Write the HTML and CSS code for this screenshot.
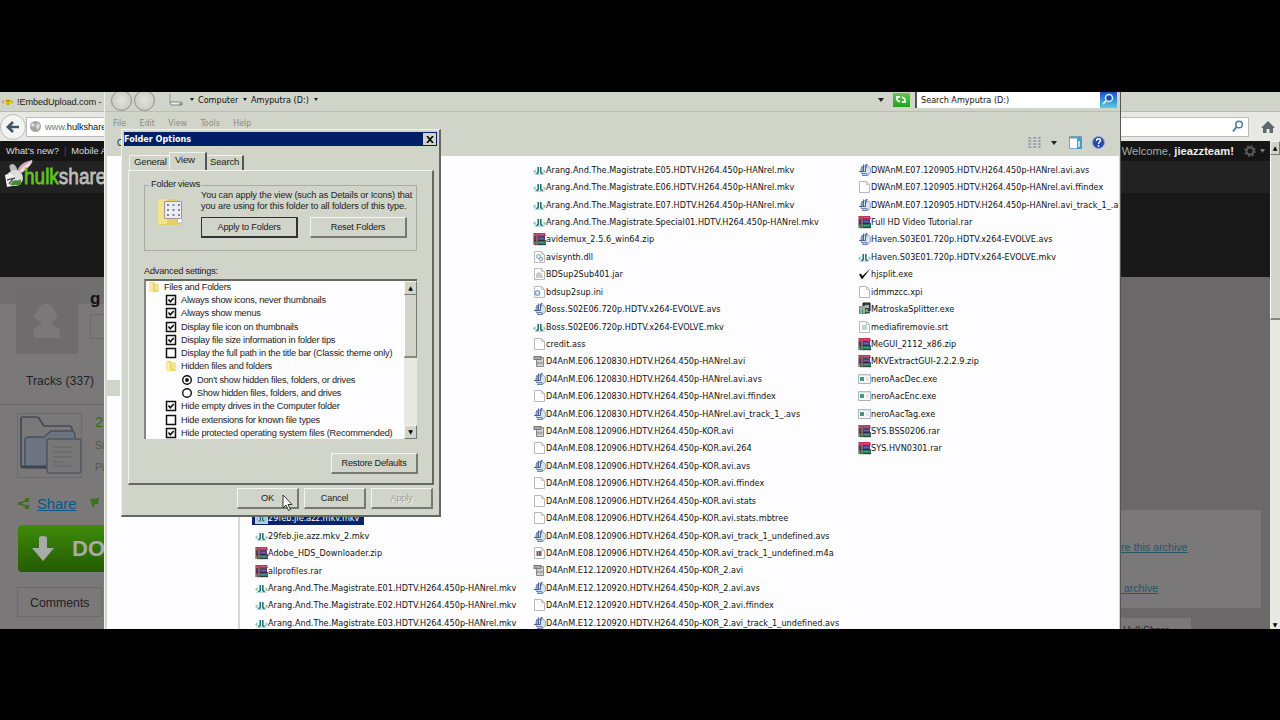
FILE: index.html
```html
<!DOCTYPE html>
<html lang="en">
<head>
<meta charset="UTF-8">
<title>Folder Options</title>
<link rel="stylesheet" href="styles.css">
</head>
<body>
<svg width="0" height="0" class="defs">
  <defs>
    <symbol id="mkv" viewBox="0 0 13 14"><path d="M2.500 6 0 8.500l2.500 2M10.500 6l2.500 2.500L10.500 10.500" fill="#7fc5ba"/><path d="M5.200 4v5q0 1.500-2 1.500M7.800 4v5q0 1.500 2 1.500" fill="none" stroke="#176b72" stroke-width="1.500"/><path d="M1.500 11.300h10" stroke="#7cc4b5" stroke-width=".7"/></symbol>
    <symbol id="rar" viewBox="0 0 13 14"><path d="M1 1h11l1 3H2z" fill="#c52b60"/><path d="M1 5h11v4H1z" fill="#4b3f92"/><path d="M1 9h12v4H2z" fill="#1c8a60"/><path d="M1 4.500h11M2 8.700h11M2 12.700h11" stroke="#271c30" stroke-width=".8"/><path d="M6 2.500h5M6 6.700h5M6 10.700h5" stroke="#b992bd" stroke-width=".5"/><path d="M4 1v12" stroke="#a66a50" stroke-width="1.400"/><path d="M1 1v12" stroke="#79213d"/></symbol>
    <symbol id="doc" viewBox="0 0 13 14"><path d="M1.500 1.500h7l3 3v8h-10z" fill="#fefeff" stroke="#b7b7bc"/><path d="M8.500 1.500v3h3" fill="none" stroke="#c5c5ca"/></symbol>
    <symbol id="dll" viewBox="0 0 13 14"><use href="#doc"/><circle cx="5.500" cy="6.500" r="2" fill="#dbe8f0" stroke="#87a2bc"/><circle cx="8" cy="9" r="1.800" fill="#e1ecf2" stroke="#7a9cbd"/></symbol>
    <symbol id="jar" viewBox="0 0 13 14"><use href="#doc"/><path d="M4 9V6M6 9V5M8 9V6M3 10h7" stroke="#a39a9a"/></symbol>
    <symbol id="ini" viewBox="0 0 13 14"><use href="#doc"/><circle cx="4.500" cy="8" r="2.500" fill="#b9d5e8" stroke="#7198ba"/><circle cx="4.500" cy="8" r=".8" fill="#fff"/></symbol>
    <symbol id="avs" viewBox="0 0 13 14"><circle cx="7.800" cy="7.500" r="5" fill="#d5e3f3" stroke="#86a1c9"/><path d="M1 8.500h3V3M5.500 1.500v7M8 5V1.500h1.500M7.500 3v5.500h-5" fill="none" stroke="#4a628e"/><path d="M3 10.500h6v2.500M4 12.500h5" fill="none" stroke="#6d84ad"/></symbol>
    <symbol id="avi" viewBox="0 0 13 14"><path d="M3.500 3.500h7v9h-7z" fill="#d9d9d9" stroke="#888"/><path d="M.5 2h8v4h-8z" fill="#777"/><path d="M1.500 4h6" stroke="#ddd"/><path d="M5 7v4M8 7v4M4 9h6" stroke="#888" stroke-width=".8"/></symbol>
    <symbol id="m4a" viewBox="0 0 13 14"><use href="#doc"/><path d="M3.500 5h5v5h-5z" fill="#765d61"/><path d="M5.500 5v5" stroke="#b69ca0"/></symbol>
    <symbol id="check" viewBox="0 0 13 14"><path d="M1 7.500 4 12.500 12.500 1.500 4.300 9 3 6.500z" fill="#111"/></symbol>
    <symbol id="setup" viewBox="0 0 13 14"><path d="M5 1h7v8H5z" fill="#35443f" stroke="#222"/><path d="M7 3h4v3H7z" fill="#a5b3b0"/><path d="M1 4h6v4H1z" fill="#87948e"/><path d="M1 8h9v4H1z" fill="#569468"/><path d="M3 5v7M6 4v7M9 7v5" stroke="#c1d4c1"/><path d="M7 10.500h5" stroke="#32573b" stroke-width="1.500"/></symbol>
    <symbol id="srt" viewBox="0 0 13 14"><use href="#doc"/><path d="M4 5h5v5H4z" fill="#b4dbd7"/></symbol>
    <symbol id="exe" viewBox="0 0 13 14"><path d="M.5 2.500h12v9H.5z" fill="#f5f9f9" stroke="#a5b5bb"/><path d="M1 3h11" stroke="#b6cddb"/><path d="M2 5h4v4H2z" fill="#4d917e"/><path d="M8 6h3M8 8h3" stroke="#ccd8dc"/></symbol>
    <symbol id="folder" viewBox="0 0 12 13"><path d="M1 1h5v2h5v9H1z" fill="#e5d569"/><path d="M1 1l4 2v10l-4-1z" fill="#f6eda0"/><path d="M7 2h3v8H7z" fill="#f2e798"/></symbol>
  </defs>
</svg>

<div class="screen">
  <!-- browser behind the windows -->
  <div class="browser">
    <div class="tabbar">
      <svg width="13" height="12" viewBox="0 0 13 12"><path d="M4 6a3 3 0 1 1 6 0 3 3 0 0 1-6 0" fill="#e6cf17"/><path d="M0 6l3-2v4zM13 6l-3-2v4z" fill="#c6b438"/><path d="M5 5h4M6 8h2" stroke="#82730c"/></svg>
      <span>!EmbedUpload.com - upload</span>
    </div>
    <div class="navbar">
      <div class="back"><svg width="14" height="14" viewBox="0 0 14 14"><path d="M7 2 2 7l5 5M2 7h11" fill="none" stroke="#41526b" stroke-width="2.700"/></svg></div>
      <div class="url">
        <svg width="13" height="13" viewBox="0 0 13 13"><circle cx="6.500" cy="6.500" r="5.500" fill="#a5a5a5"/><path d="M3 3l3 1-1 3-3-1M8 3l3 2-2 5-2-3" fill="#ddd"/></svg>
        <span>www.<b>hulkshare.com</b></span>
        <svg class="mag" width="12" height="13" viewBox="0 0 12 13"><circle cx="7" cy="4.500" r="3.300" fill="#fff" stroke="#4c79a8" stroke-width="1.500"/><path d="M4.500 7 1 11.500" stroke="#4c79a8" stroke-width="2"/></svg>
      </div>
      <svg class="home" width="14" height="14" viewBox="0 0 14 14"><path d="M7 1 0 8h2v5h3.500V9h3v4H12V8h2z" fill="#62666f"/></svg>
    </div>
    <div class="viewport">
      <div class="page">
        <div class="topbar">
          <span>What's new?</span><i>|</i><span>Mobile App</span>
          <div class="user">Welcome, <b>jieazzteam!</b>
            <svg width="24" height="12" viewBox="0 0 24 12"><circle cx="7" cy="6" r="3.500" fill="none" stroke="#5b5b5b" stroke-width="2"/><circle cx="7" cy="6" r="5" fill="none" stroke="#5b5b5b" stroke-width="1.500" stroke-dasharray="2 1.930"/><path d="M17 4h5l-2.500 4z" fill="#777"/></svg>
          </div>
        </div>
        <div class="brand">
          <svg width="32" height="34" viewBox="0 0 32 34"><path d="M15 14C15 7 20 2 30 0c2 3-4 8-11 12z" fill="#d5a9bc"/><path d="M10 13C7 8 6 4 11 4c4 2 4 5 5 9z" fill="#bbb"/><path d="M18 11c4-6 8-7 12-11-2 7-6 9-10 13z" fill="#f1dfe6"/><circle cx="13" cy="18" r="8" fill="#ddd"/><path d="M3 15l5-2 5 4-3 9-5 1z" fill="#f1f1f1"/><path d="M5 20l8-2M7 24l4-5" stroke="#555" stroke-width="1.500"/><path d="M11 21c3-2 5 1 8-2v6H8z" fill="#488a31"/></svg>
          <span><em>hulk</em>share</span>
        </div>
        <div class="banner"></div>
        <div class="content">
          <div class="left">
            <div class="profile">
              <div class="avatar"><svg width="34" height="36" viewBox="0 0 34 36"><path d="M10 2c5-4 13-2 14 4l4 7-7 6 9 6v9H4v-9l8-6-9-6z" fill="#7a7878"/></svg></div>
              <div class="name">g<span></span></div>
            </div>
            <div class="tracks">Tracks (337)</div>
            <div class="file">
              <div class="thumb"><svg width="64" height="62" viewBox="0 0 64 62"><path d="M2 52V4q0-2 2-2h13q3 0 4 3l4 6h25q3 0 3 3v3" fill="none" stroke="#414b54" stroke-width="1.700"/><path d="M6 52V25q0-3 3-3h16l7-6h21q3 0 3 5v4H33q-5 0-5 4v24z" fill="#6d7480" stroke="#46525f" stroke-width="1.500"/><path d="M2 52h25" stroke="#3a4653" stroke-width="3"/><rect x="28" y="24" width="34" height="34" rx="2" fill="#777" stroke="#54585c" stroke-width="1.500"/><path d="M34 32h20M34 37h18M34 42h20M34 47h10M34 51h19" stroke="#626466"/></svg></div>
              <div class="info"><b>29</b><span>Size</span><span>Plays</span></div>
            </div>
            <div class="share">
              <svg width="11" height="11" viewBox="0 0 11 11"><path d="M9 2 2 5.500 9 9" fill="none" stroke="#3c731b" stroke-width="1.500"/><path d="M7 0h4v4H7zM0 4h4v3H0zM7 7h4v4H7z" fill="#3c731b"/></svg>
              <a>Share</a>
              <svg width="10" height="11" viewBox="0 0 10 11"><path d="M0 1l9-1-1 6H5l-2 4z" fill="#3c731b"/></svg>
            </div>
            <div class="download"><svg width="22" height="26" viewBox="0 0 22 26"><path d="M7 2q0-2 4-2t4 2v10h7L11 25 0 12h7z" fill="#aaa"/></svg><span>DOWNLOAD</span></div>
            <div class="comments">Comments</div>
          </div>
          <div class="right">
            <div class="links"><a>Share this archive</a><a>Flag archive</a></div>
            <div class="hash">HulkShare</div>
          </div>
        </div>
      </div>
      <div class="scroll"><div class="sbtn">▲</div><div class="sthumb"></div><div class="strack"></div><div class="sbtn flat">▼</div></div>
    </div>
  </div>

  <!-- explorer window -->
  <div class="explorer">
    <div class="address">
      <div class="round"></div><div class="round"></div>
      <svg class="drive" width="15" height="14" viewBox="0 0 15 14"><path d="M1 1v8" stroke="#999"/><path d="M1 9h12v3H2z" fill="#eee" stroke="#888"/><path d="M10 11h3" stroke="#555"/></svg>
      <i class="tri"></i><span class="c1">Computer</span><i class="tri"></i><span class="c2">Amyputra (D:)</span><i class="tri"></i>
      <i class="tri big"></i>
      <div class="refresh"><svg width="16" height="13" viewBox="0 0 16 13"><path d="M4 7V4h3M4 7l3 2M12 6v3H9M12 6 9 4" fill="none" stroke="#edffe8" stroke-width="2"/></svg></div>
      <div class="search"><span>Search Amyputra (D:)</span></div>
      <div class="go"><svg width="16" height="15" viewBox="0 0 16 15"><circle cx="9" cy="6" r="3.500" fill="#1950b0" stroke="#d4eeff" stroke-width="1.500"/><path d="M6 9l-3 3" stroke="#d4eeff" stroke-width="2"/></svg></div>
    </div>
    <div class="menu"><span>File</span><span>Edit</span><span>View</span><span>Tools</span><span>Help</span></div>
    <div class="tools">
      <span>Organize</span>
      <svg class="views" width="13" height="11" viewBox="0 0 13 11"><path d="M1.500 0v11M6.500 0v11M11.500 0v11" stroke="#9097a4" stroke-width="2" stroke-dasharray="2 1"/><path d="M3.500 0v11M8.500 0v11" stroke="#b9bdc6" stroke-width="1.500" stroke-dasharray="2 1"/></svg>
      <i class="tri big"></i>
      <svg width="13" height="13" viewBox="0 0 13 13"><path d="M.5.5h12v12H.5z" fill="#fff" stroke="#79a4bd"/><path d="M0 1.500h13" stroke="#6f9cb4" stroke-width="2"/><path d="M8 2h5v11H8z" fill="#3ca5bb"/><path d="M10 5v6" stroke="#b0e7ef" stroke-width="2"/></svg>
      <svg width="13" height="13" viewBox="0 0 13 13"><circle cx="6.500" cy="6.500" r="6" fill="#274bab" stroke="#90a6db"/><path d="M4.500 5c0-3 4-3 4-.5C8.500 6 6.500 6 6.500 8M6.500 9v1.700" fill="none" stroke="#fff" stroke-width="1.400"/></svg>
    </div>
    <div class="panes">
      <div class="tree"><div class="mark"></div></div>
      <div class="files">
        <div class="col one" id="col1"></div>
        <div class="col two" id="col2"></div>
        <div class="col three" id="col3"></div>
      </div>
    </div>
  </div>

  <!-- dialog -->
  <div class="dialog">
    <div class="title"><span>Folder Options</span><div class="close"><svg width="8" height="7" viewBox="0 0 8 7"><path d="M1 0l6 7M7 0 1 7" stroke="#000" stroke-width="1.600"/></svg></div></div>
    <div class="tabs"><div class="tab">General</div><div class="tab active">View</div><div class="tab last">Search</div></div>
    <div class="panel">
      <div class="group">
        <div class="legend"><span>Folder views</span></div>
        <div class="groupbody">
          <svg width="27" height="29" viewBox="0 0 27 29"><path d="M1 1h19l3 5v21H1z" fill="#e4ce66"/><path d="M1 1h9v25H1z" fill="#f2e493"/><path d="M21 20h4v5h-5z" fill="#fff" stroke="#bbb"/><path d="M7.500 3.500h17v17h-17z" fill="#eeedf3" stroke="#999"/><path d="M10 7h13M10 12h13M10 17h13" stroke="#858097" stroke-width="2" stroke-dasharray="2 3.500"/></svg>
          <div>
            <p>You can apply the view (such as Details or Icons) that<br>you are using for this folder to all folders of this type.</p>
            <div class="pair"><div class="btn default">Apply to Folders</div><div class="btn">Reset Folders</div></div>
          </div>
        </div>
      </div>
      <div class="label">Advanced settings:</div>
      <div class="listbox">
        <div class="options" id="options"></div>
        <div class="scroll wide"><div class="sbtn">▲</div><div class="sthumb"></div><div class="strack"></div><div class="sbtn">▼</div></div>
      </div>
      <div class="btn restore">Restore Defaults</div>
    </div>
    <div class="buttons"><div class="btn">OK</div><div class="btn">Cancel</div><div class="btn disabled">Apply</div></div>
  </div>
  <svg class="cursor" width="12" height="18" viewBox="0 0 12 18"><path d="M1 1v13l3-3 2.500 5.500 2-1L6 10.500h4z" fill="#fff" stroke="#333"/></svg>
</div>

<script>
  const files = {
    col1: [
      ['mkv', '29feb.jie.azz.mkv.mkv', 'sel'],
      ['mkv', '29feb.jie.azz.mkv_2.mkv'],
      ['rar', 'Adobe_HDS_Downloader.zip'],
      ['rar', 'allprofiles.rar'],
      ['mkv', 'Arang.And.The.Magistrate.E01.HDTV.H264.450p-HANrel.mkv'],
      ['mkv', 'Arang.And.The.Magistrate.E02.HDTV.H264.450p-HANrel.mkv'],
      ['mkv', 'Arang.And.The.Magistrate.E03.HDTV.H264.450p-HANrel.mkv']
    ],
    col2: [
      ['mkv', 'Arang.And.The.Magistrate.E05.HDTV.H264.450p-HANrel.mkv'],
      ['mkv', 'Arang.And.The.Magistrate.E06.HDTV.H264.450p-HANrel.mkv'],
      ['mkv', 'Arang.And.The.Magistrate.E07.HDTV.H264.450p-HANrel.mkv'],
      ['mkv', 'Arang.And.The.Magistrate.Special01.HDTV.H264.450p-HANrel.mkv'],
      ['rar', 'avidemux_2.5.6_win64.zip'],
      ['dll', 'avisynth.dll'],
      ['jar', 'BDSup2Sub401.jar'],
      ['ini', 'bdsup2sup.ini'],
      ['avs', 'Boss.S02E06.720p.HDTV.x264-EVOLVE.avs'],
      ['mkv', 'Boss.S02E06.720p.HDTV.x264-EVOLVE.mkv'],
      ['doc', 'credit.ass'],
      ['avi', 'D4AnM.E06.120830.HDTV.H264.450p-HANrel.avi'],
      ['avs', 'D4AnM.E06.120830.HDTV.H264.450p-HANrel.avi.avs'],
      ['doc', 'D4AnM.E06.120830.HDTV.H264.450p-HANrel.avi.ffindex'],
      ['avs', 'D4AnM.E06.120830.HDTV.H264.450p-HANrel.avi_track_1_.avs'],
      ['avi', 'D4AnM.E08.120906.HDTV.H264.450p-KOR.avi'],
      ['doc', 'D4AnM.E08.120906.HDTV.H264.450p-KOR.avi.264'],
      ['avs', 'D4AnM.E08.120906.HDTV.H264.450p-KOR.avi.avs'],
      ['doc', 'D4AnM.E08.120906.HDTV.H264.450p-KOR.avi.ffindex'],
      ['doc', 'D4AnM.E08.120906.HDTV.H264.450p-KOR.avi.stats'],
      ['doc', 'D4AnM.E08.120906.HDTV.H264.450p-KOR.avi.stats.mbtree'],
      ['avs', 'D4AnM.E08.120906.HDTV.H264.450p-KOR.avi_track_1_undefined.avs'],
      ['m4a', 'D4AnM.E08.120906.HDTV.H264.450p-KOR.avi_track_1_undefined.m4a'],
      ['avi', 'D4AnM.E12.120920.HDTV.H264.450p-KOR_2.avi'],
      ['avs', 'D4AnM.E12.120920.HDTV.H264.450p-KOR_2.avi.avs'],
      ['doc', 'D4AnM.E12.120920.HDTV.H264.450p-KOR_2.avi.ffindex'],
      ['avs', 'D4AnM.E12.120920.HDTV.H264.450p-KOR_2.avi_track_1_undefined.avs']
    ],
    col3: [
      ['avs', 'DWAnM.E07.120905.HDTV.H264.450p-HANrel.avi.avs'],
      ['doc', 'DWAnM.E07.120905.HDTV.H264.450p-HANrel.avi.ffindex'],
      ['avs', 'DWAnM.E07.120905.HDTV.H264.450p-HANrel.avi_track_1_.avs'],
      ['rar', 'Full HD Video Tutorial.rar'],
      ['avs', 'Haven.S03E01.720p.HDTV.x264-EVOLVE.avs'],
      ['mkv', 'Haven.S03E01.720p.HDTV.x264-EVOLVE.mkv'],
      ['check', 'hjsplit.exe'],
      ['doc', 'idmmzcc.xpi'],
      ['setup', 'MatroskaSplitter.exe'],
      ['srt', 'mediafiremovie.srt'],
      ['rar', 'MeGUI_2112_x86.zip'],
      ['rar', 'MKVExtractGUI-2.2.2.9.zip'],
      ['exe', 'neroAacDec.exe'],
      ['exe', 'neroAacEnc.exe'],
      ['exe', 'neroAacTag.exe'],
      ['rar', 'SYS.BSS0206.rar'],
      ['rar', 'SYS.HVN0301.rar']
    ]
  };
  for (const id in files) {
    document.getElementById(id).innerHTML = files[id].map(([icon, name, cls]) =>
      `<div class="file-row ${cls || ''}"><svg width="13" height="14"><use href="#${icon}"/></svg><span>${name}</span></div>`).join('');
  }

  const options = [
    ['folder', 0, 'Files and Folders'],
    ['on', 1, 'Always show icons, never thumbnails'],
    ['on', 1, 'Always show menus'],
    ['on', 1, 'Display file icon on thumbnails'],
    ['on', 1, 'Display file size information in folder tips'],
    ['off', 1, 'Display the full path in the title bar (Classic theme only)'],
    ['folder', 1, 'Hidden files and folders'],
    ['radio-on', 2, "Don't show hidden files, folders, or drives"],
    ['radio', 2, 'Show hidden files, folders, and drives'],
    ['on', 1, 'Hide empty drives in the Computer folder'],
    ['off', 1, 'Hide extensions for known file types'],
    ['on', 1, 'Hide protected operating system files (Recommended)']
  ];
  const marks = {
    'folder': '<use href="#folder"/>',
    'on': '<path d="M1.500 1.500h9v9h-9z" fill="#fff" stroke="#111" stroke-width="1.500"/><path d="M3.500 5.500 5.300 7.800 8.700 4" fill="none" stroke="#111" stroke-width="1.700"/>',
    'off': '<path d="M1.500 1.500h9v9h-9z" fill="#fff" stroke="#111" stroke-width="1.500"/>',
    'radio': '<circle cx="6" cy="6" r="4.300" fill="#fff" stroke="#111" stroke-width="1.400"/>',
    'radio-on': '<circle cx="6" cy="6" r="4.300" fill="#fff" stroke="#111" stroke-width="1.400"/><circle cx="6" cy="6" r="1.900" fill="#111"/>'
  };
  document.getElementById('options').innerHTML = options.map(([mark, level, text]) =>
    `<div class="option level${level}"><svg width="12" height="12">${marks[mark]}</svg><span>${text}</span></div>`).join('');
</script>
</body>
</html>
```
FILE: styles.css
```css
* {
  box-sizing: border-box;
}
body {
  margin: 0;
  background: #000;
  font-family: "Liberation Sans", Arial, sans-serif;
  font-size: 10px;
  color: #222;
  overflow: hidden;
}
svg {
  display: block;
  flex: none;
}
.defs {
  position: absolute;
}
i, em {
  font-style: normal;
}
.screen {
  position: relative;
  width: 1280px;
  height: 537px;
  margin-top: 92px;
  overflow: hidden;
  white-space: nowrap;
}

/* browser */
.browser {
  height: 537px;
  display: flex;
  flex-direction: column;
  background: #d1d4c8;
}
.tabbar {
  flex: none;
  height: 20px;
  display: flex;
  align-items: center;
  gap: 3px;
  padding-left: 1px;
  font-size: 9.200px;
  letter-spacing: -.1px;
  border-bottom: 1px solid #b7b9b0;
}
.navbar {
  flex: none;
  height: 29px;
  display: flex;
  align-items: center;
  background: #e8e9e4;
  padding-right: 5px;
}
.back {
  width: 26px;
  height: 26px;
  border-radius: 50%;
  background: #f4f5f2;
  border: 1px solid #bbb;
  display: flex;
  align-items: center;
  justify-content: center;
}
.url {
  flex: 1;
  height: 20px;
  margin-right: 12px;
  display: flex;
  align-items: center;
  gap: 3px;
  padding: 0 4px 0 2px;
  background: #fff;
  border: 1px solid #bbb;
  color: #777;
  font-size: 9.300px;
  letter-spacing: -.1px;
}
.url b {
  font-weight: normal;
  color: #111;
}
.mag {
  margin-left: auto;
}
.viewport {
  flex: 1;
  min-height: 0;
  display: flex;
}
.page {
  flex: 1;
  display: flex;
  flex-direction: column;
  overflow: hidden;
  background: #6a6868;
}
.topbar {
  flex: none;
  height: 20px;
  display: flex;
  align-items: center;
  gap: 5px;
  padding-left: 6px;
  background: #151515;
  color: #ddd;
  font-size: 9.300px;
}
.topbar i {
  color: #555;
}
.user {
  display: flex;
  align-items: center;
  margin-left: auto;
  padding-right: 3px;
  color: #aaa;
  font-size: 11.200px;
  white-space: pre;
}
.user b {
  color: #eee;
  margin-right: 9px;
}
.brand {
  flex: none;
  height: 32px;
  display: flex;
  padding-left: 2px;
  background: #222;
}
.brand svg {
  margin-top: -1px;
}
.brand span {
  margin-left: -10px;
  padding-top: 3px;
  font-size: 19px;
  line-height: 26px;
  color: #bbb;
  -webkit-text-stroke: .7px;
  transform: scaleY(1.18);
  transform-origin: 0 60%;
}
.brand em {
  color: #5fc421;
}
.banner {
  flex: none;
  height: 84px;
  background: #181818;
}
.content {
  flex: 1;
  min-height: 0;
  display: flex;
  justify-content: space-between;
}
.left {
  width: 110px;
  height: 352px;
  overflow: hidden;
  background: linear-gradient(#706e6e 27px, #7a7878 27px);
}
.profile {
  display: flex;
  padding: 13px 0 0 16px;
  height: 88px;
}
.avatar {
  width: 67px;
  height: 64px;
  background: #6e6c6c;
  display: flex;
  align-items: center;
  justify-content: center;
}
.name {
  margin-left: 12px;
  font-size: 17px;
  line-height: 18px;
  font-weight: bold;
  color: #111;
}
.name span {
  display: block;
  width: 20px;
  height: 25px;
  margin-top: 6px;
  border: 1px solid #6c6a6a;
}
.tracks {
  height: 40px;
  padding: 9px 0 0 26px;
  font-size: 12px;
  letter-spacing: .1px;
  border-bottom: 1px solid #6c6a6a;
}
.file {
  display: flex;
  height: 86px;
  padding: 8px 0 0 17px;
}
.thumb {
  width: 65px;
  height: 65px;
  padding: 1px;
  border: 1px solid #6b6969;
}
.info {
  margin-left: 13px;
  display: flex;
  flex-direction: column;
  font-size: 10px;
  color: #555;
}
.info b {
  font-size: 15px;
  font-weight: normal;
  color: #386b18;
  height: 27px;
}
.info span {
  height: 22px;
}
.share {
  display: flex;
  align-items: center;
  height: 25px;
  padding-left: 18px;
  gap: 8px;
}
.share a {
  font-size: 14.800px;
  color: #075a89;
  text-decoration: underline;
  margin-right: 5px;
}
.download {
  margin: 9px 0 0 18px;
  height: 47px;
  width: 200px;
  display: flex;
  align-items: center;
  gap: 18px;
  padding-left: 14px;
  border-radius: 4px 0 0 4px;
  background: linear-gradient(#3e8b0b, #245b03);
  color: #aaa;
  font-size: 22px;
  font-weight: bold;
}
.comments {
  margin: 15px 0 0 17px;
  width: 85px;
  height: 30px;
  padding: 8px 0 0 12px;
  border: 1px solid #6b6969;
  font-size: 12.300px;
}
.right {
  width: 160px;
  padding-top: 233px;
}
.links {
  width: 151px;
  height: 98px;
  background: #7a7878;
  display: flex;
  flex-direction: column;
  align-items: flex-start;
  padding-top: 31px;
  gap: 28px;
}
.links a {
  font-size: 10.700px;
  line-height: 13px;
  color: #29556a;
  text-decoration: underline;
}
.links a:first-child {
  margin-left: -8px;
}
.links a:last-child {
  margin-left: -10px;
}
.hash {
  width: 81px;
  height: 30px;
  margin-top: 10px;
  padding: 7px 0 0 13px;
  background: #7a7878;
}

/* scrollbars */
.scroll {
  width: 10px;
  display: flex;
  flex-direction: column;
  background: #e8e9e2;
}
.sbtn {
  height: 14px;
  background: #d1d4c8;
  border: 1px solid #f4f5ef;
  border-right-color: #777;
  border-bottom-color: #777;
  font: 6px/11px "DejaVu Sans", sans-serif;
  text-align: center;
  color: #000;
}
.sbtn.flat {
  height: 8px;
  background: none;
  border: none;
  line-height: 7px;
}
.sthumb {
  height: 165px;
  background: #d1d4c8;
  border-left: 1px solid #fff;
  border-bottom: 2px solid #86887f;
}
.strack {
  flex: 1;
}

/* explorer */
.explorer {
  position: absolute;
  left: 104px;
  top: 0;
  width: 1017px;
  height: 537px;
  display: flex;
  flex-direction: column;
  background: #d1d4c8;
  border-left: 1px solid #eff0e8;
  border-right: 1px solid #555;
  font-family: "DejaVu Sans Condensed", "DejaVu Sans", sans-serif;
  font-stretch: condensed;
  font-size: 9px;
  color: #111;
}
.address {
  height: 20px;
  display: flex;
  align-items: center;
  padding: 0 3px 4px 6px;
  border-bottom: 1px solid #bbbdb3;
}
.round {
  width: 21px;
  height: 21px;
  margin: 1px 2px 0 0;
  border-radius: 50%;
  border: 1px solid #8e8f89;
  background: radial-gradient(#e2e3dc, #c3c5bb);
}
.drive {
  margin: 0 6px 0 12px;
}
.tri {
  border: 2.500px solid transparent;
  border-top: 3px solid #222;
  border-bottom: 0;
}
.tri.big {
  border-width: 3.500px;
  border-top-width: 4px;
  border-bottom: 0;
}
.address .c1 {
  width: 39px;
  margin: 0 6px 0 4px;
}
.address .c2 {
  width: 58px;
  margin: 0 5px 0 4px;
}
.address .big {
  margin-left: auto;
}
.refresh {
  width: 17px;
  height: 14px;
  margin: 0 5px 0 9px;
  background: linear-gradient(#5fcc52, #239e22);
}
.search {
  width: 185px;
  height: 17px;
  padding-left: 4px;
  line-height: 18px;
  background: #fff;
  border-left: 2px solid #555;
}
.go {
  width: 17px;
  height: 16px;
  background: linear-gradient(#1a51c2, #5ccbe4);
}
.menu {
  display: flex;
  gap: 13.400px;
  height: 24px;
  padding: 6px 0 0 8px;
  font-size: 8.800px;
  color: #8c8e86;
}
.tools {
  height: 20px;
  display: flex;
  align-items: center;
  padding: 0 15px 7px 12px;
}
.tools .views {
  margin-left: auto;
}
.tools .big {
  margin: 0 12px 0 10px;
}
.tools svg:last-child {
  margin-left: 10px;
}
.panes {
  flex: 1;
  display: flex;
  min-height: 0;
  margin: 0 1px 0 2px;
  background: #fdfcfe;
}
.tree {
  width: 133px;
  padding-top: 224px;
  border-right: 2px solid #d7d8d1;
}
.mark {
  width: 13px;
  height: 16px;
  background: #d1d4c8;
}
.files {
  flex: 1;
  display: flex;
  padding: 5px 0 0 15px;
  overflow: hidden;
  letter-spacing: .04px;
}
.col {
  height: 470.600px;
  display: flex;
  flex-direction: column;
}
.one {
  width: 278px;
  justify-content: flex-end;
}
.two {
  width: 325px;
}
.three {
  width: 261px;
  overflow: hidden;
}
.file-row {
  height: 17.430px;
  flex: none;
  display: flex;
  align-items: center;
}
.sel {
  width: 112px;
  margin-left: -3px;
  padding-left: 3px;
  background: linear-gradient(#08246b 15.500px, transparent 15.500px);
  color: #fff;
}
.sel svg {
  background: #bcd0e2;
  height: 12px;
}

/* dialog */
.dialog {
  position: absolute;
  left: 121px;
  top: 37px;
  width: 320px;
  height: 388px;
  padding: 2px;
  background: #d1d4c8;
  border: 1px solid #f1f2ec;
  border-right: 2px solid #66675f;
  border-bottom: 2px solid #66675f;
  font-size: 9.200px;
  letter-spacing: -.21px;
}
.title {
  height: 14px;
  display: flex;
  align-items: center;
  justify-content: space-between;
  padding: 0 1px 0 0;
  background: #001e68;
  color: #fff;
  font: bold 9px "DejaVu Sans Condensed", "DejaVu Sans", sans-serif;
  font-stretch: condensed;
  letter-spacing: 0;
}
.close {
  width: 13px;
  height: 12px;
  background: #d1d4c8;
  display: flex;
  align-items: center;
  justify-content: center;
}
.tabs {
  display: flex;
  align-items: flex-end;
  height: 24px;
  padding-left: 5px;
}
.tab {
  width: 40px;
  height: 15px;
  line-height: 12px;
  padding-left: 4px;
  font-size: 9.600px;
  border-top: 1px solid #f1f2ec;
  border-left: 1px solid #f1f2ec;
}
.tab.active {
  width: 38px;
  height: 18px;
  padding-left: 5px;
  line-height: 14px;
  border-right: 2px solid #555;
}
.tab.last {
  width: 37px;
  padding-left: 3px;
  border-left: none;
  border-right: 2px solid #555;
}
.panel {
  display: flex;
  flex-direction: column;
  margin: 0 4px 0 4px;
  width: 306px;
  height: 315px;
  padding: 14px 15px 0 15px;
  border: 1px solid #f1f2ec;
  border-right: 2px solid #66675f;
  border-bottom: 2px solid #66675f;
}
.group {
  height: 66px;
  width: 273px;
  border: 1px solid #a9aba2;
}
.legend {
  height: 9px;
}
.legend span {
  display: inline-block;
  margin-left: 4px;
  padding: 0 2px;
  line-height: 11px;
  background: #d1d4c8;
  transform: translateY(-7px);
}
.groupbody {
  display: flex;
  gap: 17px;
  padding-left: 12px;
}
.groupbody svg {
  margin-top: 3px;
}
.groupbody p {
  margin: -5px 0 4.500px;
  line-height: 11.300px;
  letter-spacing: -.12px;
}
.pair {
  display: flex;
  gap: 12px;
}
.btn {
  width: 62px;
  height: 21px;
  display: flex;
  align-items: center;
  justify-content: center;
  border: 1px solid #f4f5ef;
  border-right: 2px solid #777970;
  border-bottom: 2px solid #777970;
}
.pair .btn {
  width: 97px;
}
.pair .default {
  border-color: #333;
}
.label {
  height: 28px;
  padding-top: 15px;
}
.listbox {
  width: 273px;
  height: 160px;
  display: flex;
  flex: none;
  overflow: hidden;
  background: #fdfcfe;
  border-top: 2px solid #66675f;
  border-left: 2px solid #85877e;
}
.options {
  flex: 1;
  min-width: 0;
  margin-top: -1px;
}
.option {
  height: 13.300px;
  display: flex;
  align-items: center;
  gap: 4px;
}
.level0 {
  padding-left: 2px;
}
.level1 {
  padding-left: 19px;
}
.level2 {
  padding-left: 35px;
}
.wide {
  flex: none;
  width: 13px;
}
.wide .sthumb {
  height: 63px;
  border-right: 1px solid #777;
}
.restore {
  width: 87px;
  margin: 14px 0 0 187px;
}
.buttons {
  display: flex;
  justify-content: flex-end;
  gap: 5px;
  padding: 3px 4px 0 0;
}
.disabled {
  color: #9fa198;
  text-shadow: 1px 1px #f1f2ec;
}
.cursor {
  position: absolute;
  left: 282px;
  top: 402px;
}
```
